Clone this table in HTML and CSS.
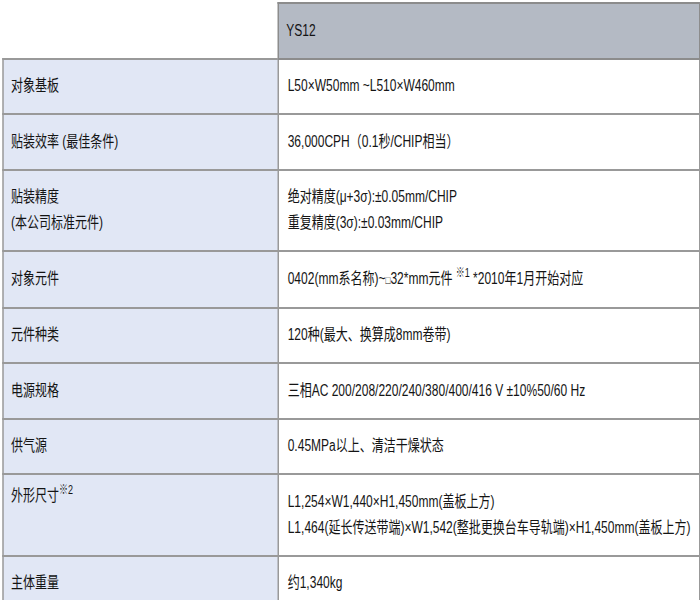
FILE: index.html
```html
<!DOCTYPE html>
<html lang="zh-CN">
<head>
<meta charset="utf-8">
<title>YS12 规格</title>
<link rel="stylesheet" href="styles.css">
</head>
<body>
<div class="frame">
<div class="sheet">
  <table class="spec">
    <colgroup><col class="c-label"><col class="c-value"></colgroup>
    <tr class="head">
      <th class="blank"></th>
      <th class="model">YS12</th>
    </tr>
    <tr><th>对象基板</th><td>L50×W50mm ~L510×W460mm</td></tr>
    <tr><th>贴装效率 (最佳条件)</th><td>36,000CPH（0.1秒/CHIP相当）</td></tr>
    <tr><th>贴装精度<br>(本公司标准元件)</th><td>绝对精度(μ+3σ):±0.05mm/CHIP<br>重复精度(3σ):±0.03mm/CHIP</td></tr>
    <tr><th>对象元件</th><td>0402(mm系名称)~<span class="box">□</span>32*mm元件 <sup>※1</sup> *2010年1月开始对应</td></tr>
    <tr><th>元件种类</th><td>120种(最大、换算成8mm卷带)</td></tr>
    <tr><th>电源规格</th><td>三相AC 200/208/220/240/380/400/416 V ±10%50/60 Hz</td></tr>
    <tr><th>供气源</th><td>0.45MPa以上、清洁干燥状态</td></tr>
    <tr><th class="top">外形尺寸<sup>※2</sup></th><td>L1,254×W1,440×H1,450mm(盖板上方)<br>L1,464(延长传送带端)×W1,542(整批更换台车导轨端)×H1,450mm(盖板上方)</td></tr>
    <tr><th>主体重量</th><td>约1,340kg</td></tr>
  </table>
</div>
</div>
</body>
</html>
```

FILE: styles.css
```css
html, body {
  margin: 0;
  padding: 0;
  background: #fff;
  overflow: hidden;
}

.frame {
  width: 700px;
  height: 600px;
  overflow: hidden;
}

.sheet {
  width: 929px;
  padding: 2px 0 0 2.6px;
  transform: scaleX(0.75);
  transform-origin: 0 0;
  font-family: "Liberation Sans", "Noto Sans CJK SC", sans-serif;
  font-size: 16px;
  color: #141414;
}

.spec {
  border-collapse: collapse;
  table-layout: fixed;
  width: 929px;
}

.c-label { width: 367px; }
.c-value { width: 562px; }

.spec th,
.spec td {
  padding: 13.75px 12px 13.75px 12px;
  line-height: 26px;
  border: 2px solid #999;
  text-align: left;
  font-weight: normal;
  vertical-align: middle;
  white-space: nowrap;
}

.spec th {
  background: #e1e7f5;
  padding-left: 10px;
}

.spec td {
  background: #fff;
}

.head .blank {
  background: #fff;
  border: none;
}

.head .model {
  background: #b4bac4;
  border-color: #8c8c8c;
  padding-left: 10px;
}

.spec th.top {
  vertical-align: top;
  padding-top: 8px;
}

sup {
  font-size: 12px;
  line-height: 0;
  vertical-align: 7px;
}

.box {
  font-size: 11px;
}
```
